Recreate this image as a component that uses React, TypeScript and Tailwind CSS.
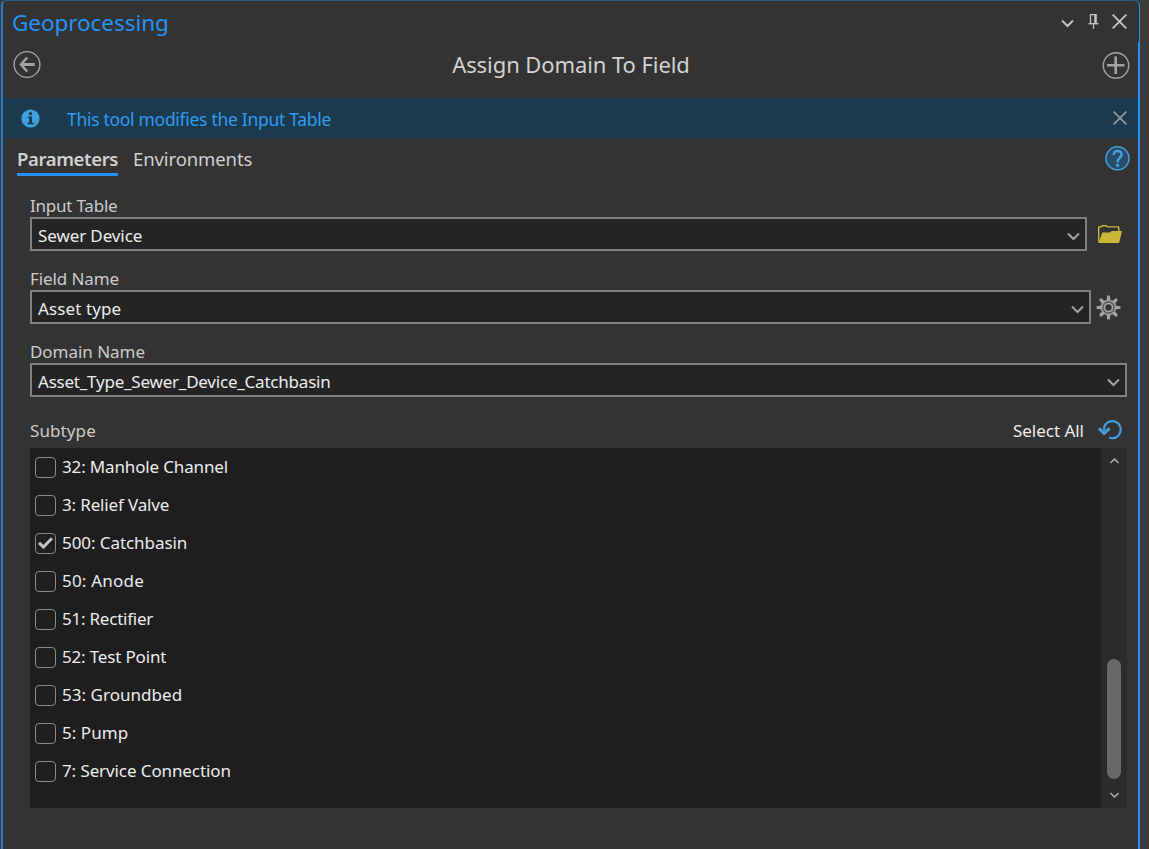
import type { ReactNode } from "react";

function Chevron({ className = "", up = false, small = false }: { className?: string; up?: boolean; small?: boolean }) {
  const d = small ? (up ? "M1.5 6 L5.5 2 L9.5 6" : "M1.5 2 L5.5 6 L9.5 2") : "M1 1.5 L6.5 7 L12 1.5";
  return (
    <svg
      className={className}
      width={small ? 11 : 13}
      height={small ? 8 : 9}
      viewBox={small ? "0 0 11 8" : "0 0 13 9"}
      fill="none"
      stroke="currentColor"
      strokeWidth={small ? 1.5 : 2}
    >
      <path d={d} />
    </svg>
  );
}

function Cross({ size, width }: { size: number; width: number }) {
  return (
    <svg width={size} height={size} viewBox="0 0 14 14" fill="none" stroke="currentColor" strokeWidth={width}>
      <path d="M0.6 0.6 L13.4 13.4 M13.4 0.6 L0.6 13.4" />
    </svg>
  );
}

function Pin() {
  return (
    <svg width="11" height="15" viewBox="0 0 11 15" fill="none" stroke="currentColor">
      <path d="M2.5 9.5 V0.7 H8" strokeWidth="1.3" />
      <path d="M7.5 0 V10" strokeWidth="2.6" />
      <path d="M0.5 9.7 H10.5" strokeWidth="1.4" />
      <path d="M5.5 10 V15" strokeWidth="1.2" />
    </svg>
  );
}

function BackIcon() {
  return (
    <svg width="28" height="28" viewBox="0 0 28 28" fill="none" stroke="#a3a3a3">
      <circle cx="14" cy="14.5" r="12.9" strokeWidth="1.4" />
      <path d="M8 14.5 H21.7" strokeWidth="3" />
      <path d="M14.2 7.5 L8 14.5 L14.2 21.5" strokeWidth="2.6" />
    </svg>
  );
}

function PlusIcon() {
  return (
    <svg width="28" height="28" viewBox="0 0 28 28" fill="none" stroke="#a3a3a3">
      <circle cx="14" cy="14.4" r="12.7" strokeWidth="1.4" />
      <path d="M5 14.2 H22.5 M13.7 5.4 V23" strokeWidth="2.6" />
    </svg>
  );
}

function InfoIcon() {
  return (
    <svg width="19" height="19" viewBox="0 0 19 19">
      <circle cx="9.5" cy="9.5" r="9.1" fill="#41a0dc" />
      <circle cx="9.5" cy="4.6" r="1.7" fill="#1c3a4d" />
      <path d="M6.6 7.4 H11 V13.8 H12.8 V15.2 H6.4 V13.8 H8.2 V8.8 H6.6 Z" fill="#1c3a4d" />
    </svg>
  );
}

function HelpIcon() {
  return (
    <svg width="25" height="25" viewBox="0 0 25 25" fill="none" stroke="#41a0dc">
      <circle cx="12.5" cy="12.3" r="11.5" fill="#2a4c66" strokeWidth="1.5" />
      <path d="M8.7 9 C8.6 6.4 10.2 5.1 12.5 5.1 C14.9 5.1 16.5 6.4 16.5 8.6 C16.5 11.8 12.6 12 12.6 16.4" strokeWidth="2.5" />
      <path d="M11.1 18 H14.1 V20.8 H11.1 Z" fill="#41a0dc" stroke="none" />
    </svg>
  );
}

function FolderIcon() {
  return (
    <svg width="24" height="18" viewBox="0 0 24 18">
      <path d="M0.7 17.3 V1.9 H3.4 L4.4 0.7 H8.4 L9.6 1.9 H20.7 V6" fill="none" stroke="#cbb638" strokeWidth="1.4" />
      <path d="M4.2 7.6 H12.2 L13.6 6 H24 L21.1 18 H0.6 Z" fill="#cbb638" />
    </svg>
  );
}

function GearIcon() {
  const angles = [0, 45, 90, 135, 180, 225, 270, 315];
  return (
    <svg width="25" height="25" viewBox="0.5 0.5 25 25">
      {angles.map((a) => (
        <path key={a} d="M10.9 6.5 L11.7 1 H14.3 L15.1 6.5 Z" fill="#a3a3a3" transform={`rotate(${a} 13 13)`} />
      ))}
      <circle cx="13" cy="13" r="7.1" fill="#5c5c5c" stroke="#a3a3a3" strokeWidth="1.4" />
      <circle cx="13" cy="13" r="4" fill="#333333" stroke="#a3a3a3" strokeWidth="1.7" />
    </svg>
  );
}

function ResetIcon() {
  return (
    <svg className="mb-[4px]" width="24" height="20" viewBox="0 0 24 20" fill="none" stroke="#41a0dc">
      <path d="M6 10.5 C5.5 4.8 9.3 1.1 14.2 1.1 C19.2 1.1 22.7 4.9 22.7 9.6 C22.7 14.4 19.2 18.2 14.4 18.2 C13.2 18.2 12.2 18 11.2 17.6" strokeWidth="2.2" />
      <path d="M0.9 8.3 L6 13.4 L11.6 8.3" strokeWidth="3" />
    </svg>
  );
}

function Field({ label, labelClass, value, valueClass, width, children }: {
  label: string;
  labelClass: string;
  value: string;
  valueClass: string;
  width: string;
  children?: ReactNode;
}) {
  return (
    <div className="h-[73px]">
      <div className="h-[21px] text-[17px] leading-[19px] text-[#cbcbcb]">
        <span className={labelClass}>{label}</span>
      </div>
      <div className="flex items-center">
        <div className={`flex h-[34px] items-center justify-between border-2 border-[#808080] bg-[#242424] pr-[5px] pl-[6px] ${width}`}>
          <span className={`mt-[3px] text-[17px] leading-[22px] text-[#ececec] ${valueClass}`}>{value}</span>
          <Chevron className="mt-[4px] text-[#a4a4a4]" />
        </div>
        {children}
      </div>
    </div>
  );
}

const subtypes = [
  { name: "32: Manhole Channel", tracking: "tracking-[-0.15px]" },
  { name: "3: Relief Valve", tracking: "tracking-[-0.15px]" },
  { name: "500: Catchbasin", tracking: "tracking-[-0.07px]", checked: true },
  { name: "50: Anode", tracking: "tracking-[0.2px]" },
  { name: "51: Rectifier", tracking: "tracking-[-0.23px]" },
  { name: "52: Test Point", tracking: "tracking-[-0.17px]" },
  { name: "53: Groundbed", tracking: "tracking-[0.03px]" },
  { name: "5: Pump", tracking: "tracking-[0.04px]" },
  { name: "7: Service Connection", tracking: "tracking-[-0.1px]" },
];

function Checkbox({ checked }: { checked?: boolean }) {
  return (
    <span className="flex h-[21px] w-[21px] items-center justify-center rounded-[4px] border border-[#8a8a8a] bg-[#1f1f1f]">
      {checked && (
        <svg width="15" height="12" viewBox="0 0 15 12" fill="none" stroke="#c4c4c4" strokeWidth="3">
          <path d="M1 5.8 L5.4 10 L14 1.2" />
        </svg>
      )}
    </span>
  );
}

export default function App() {
  return (
    <div className="flex h-[849px] w-[1149px] overflow-hidden bg-[#3b3b3b] pl-px font-['Noto_Sans','Open_Sans',sans-serif] whitespace-nowrap">
      <div className="flex w-[1139px] flex-col rounded-t-[5px] border-t border-l-2 border-t-[#2c5d85] border-l-[#2b7cc4] bg-[#333333]">
        <header className="flex h-[41px] items-center justify-between rounded-tr-[5px] border-r border-[#2492f5] pr-[12px] pl-[9px]">
          <h1 className="mt-[3px] text-[22.5px] leading-[30px] tracking-[-0.06px] text-[#2492f5]">Geoprocessing</h1>
          <div className="flex items-center text-[#c2c2c2]">
            <Chevron className="mt-[4px] mr-[14px]" />
            <div className="mr-[13px]"><Pin /></div>
            <div className="mb-px"><Cross size={15} width={1.8} /></div>
          </div>
        </header>

        <div className="flex min-h-0 flex-1 flex-col border-r-2 border-[#2492f5]">
          <div className="flex h-[56px] items-start justify-between pr-[8px] pl-[10px]">
            <div className="mt-[8px]"><BackIcon /></div>
            <h2 className="mt-[7px] mr-px text-[22px] leading-[30px] tracking-[-0.08px] text-[#d2d2d2]">Assign Domain To Field</h2>
            <div className="mt-[9px]"><PlusIcon /></div>
          </div>

          <div className="flex h-[40px] items-center bg-[#1c3a4d] pr-[11px] pl-[18px]">
            <InfoIcon />
            <span className="mt-px ml-[27px] flex-1 text-[17.5px] leading-[24px] tracking-[-0.3px] text-[#2f9bf4]">
              This tool modifies the Input Table
            </span>
            <span className="text-[#8b9499]"><Cross size={14} width={1.9} /></span>
          </div>

          <div className="flex h-[57px] items-start justify-between pr-[8px] pl-[14px]">
            <nav className="flex gap-[15px] text-[18.5px] leading-[26px] text-[#d0d0d0]">
              <span className="flex h-[38px] w-[101px] flex-col justify-between border-b-[3px] border-[#2492f5] pt-[8px] font-semibold">
                <span className="tracking-[-0.37px]">Parameters</span>
              </span>
              <span className="pt-[8px] tracking-[-0.1px]">Environments</span>
            </nav>
            <div className="mt-[8px]"><HelpIcon /></div>
          </div>

          <main className="flex flex-col pt-px pl-[27px]">
            <Field label="Input Table" labelClass="tracking-[-0.22px]" value="Sewer Device" valueClass="tracking-[-0.1px]" width="w-[1057px]">
              <div className="ml-[11px]"><FolderIcon /></div>
            </Field>
            <Field label="Field Name" labelClass="tracking-[-0.1px]" value="Asset type" valueClass="tracking-[0.1px]" width="w-[1061px]">
              <div className="ml-[5px]"><GearIcon /></div>
            </Field>
            <Field label="Domain Name" labelClass="tracking-[-0.04px]" value="Asset_Type_Sewer_Device_Catchbasin" valueClass="tracking-[-0.22px]" width="w-[1097px]" />

            <div className="flex h-[33px] w-[1097px] items-center pr-[5px] text-[17px] leading-[24px]">
              <span className="mb-[2px] flex-1 tracking-[0.1px] text-[#cbcbcb]">Subtype</span>
              <span className="mr-[14px] mb-[2px] tracking-[-0.02px] text-[#ececec]">Select All</span>
              <ResetIcon />
            </div>

            <div className="flex h-[360px] w-[1097px] bg-[#1e1e1e]">
              <ul className="flex-1 pl-[5px]">
                {subtypes.map((item) => (
                  <li key={item.name} className="flex h-[38px] items-center gap-[6px]">
                    <Checkbox checked={item.checked} />
                    <span className={`mb-px text-[17px] leading-[24px] text-[#ececec] ${item.tracking}`}>{item.name}</span>
                  </li>
                ))}
              </ul>
              <div className="flex w-[26px] flex-col items-center bg-[#2b2b2b] pt-[9px] pb-[9px] text-[#b0b0b0]">
                <Chevron small up />
                <div className="mt-[194px] h-[120px] w-[14px] rounded-full bg-[#686868]" />
                <Chevron small className="mt-auto" />
              </div>
            </div>
          </main>
        </div>
      </div>
    </div>
  );
}
